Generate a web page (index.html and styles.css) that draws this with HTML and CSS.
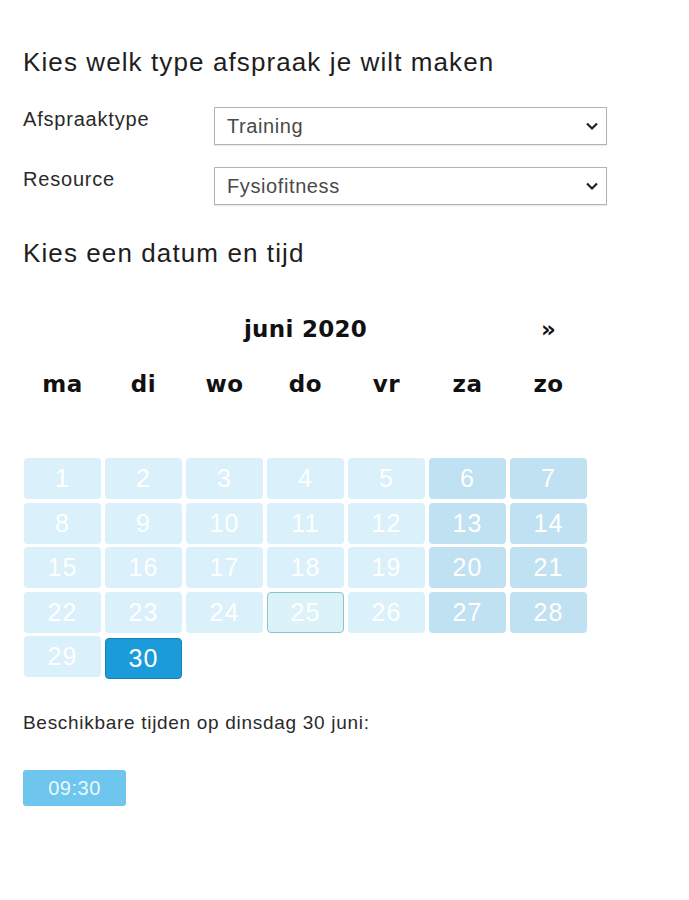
FILE: index.html
```html
<!DOCTYPE html>
<html lang="nl">
<head>
<meta charset="UTF-8" />
<meta name="viewport" content="width=device-width, initial-scale=1" />
<title>Afspraak maken</title>
<link rel="stylesheet" href="styles.css">
</head>
<body>

<div class="page">
  <h2 class="title">Kies welk type afspraak je wilt maken</h2>

  <div class="form-row">
    <label class="form-label">Afspraaktype</label>
    <div class="select">
      <span>Training</span>
      <svg class="chev" width="14" height="10" viewBox="0 0 14 10"><path d="M2 2.5 L7 7.5 L12 2.5" fill="none" stroke="#222" stroke-width="2.2"/></svg>
    </div>
  </div>

  <div class="form-row">
    <label class="form-label">Resource</label>
    <div class="select">
      <span>Fysiofitness</span>
      <svg class="chev" width="14" height="10" viewBox="0 0 14 10"><path d="M2 2.5 L7 7.5 L12 2.5" fill="none" stroke="#222" stroke-width="2.2"/></svg>
    </div>
  </div>

  <h2 class="title title-date">Kies een datum en tijd</h2>

  <div class="calendar">
    <div class="cal-head">
      <span></span>
      <span class="month">juni 2020</span>
      <span class="next">&raquo;</span>
    </div>
    <div class="weekdays">
      <span>ma</span><span>di</span><span>wo</span><span>do</span><span>vr</span><span>za</span><span>zo</span>
    </div>
    <div class="days">
      <span class="day">1</span><span class="day">2</span><span class="day">3</span><span class="day">4</span><span class="day">5</span><span class="day weekend">6</span><span class="day weekend">7</span>
      <span class="day">8</span><span class="day">9</span><span class="day">10</span><span class="day">11</span><span class="day">12</span><span class="day weekend">13</span><span class="day weekend">14</span>
      <span class="day">15</span><span class="day">16</span><span class="day">17</span><span class="day">18</span><span class="day">19</span><span class="day weekend">20</span><span class="day weekend">21</span>
      <span class="day">22</span><span class="day">23</span><span class="day">24</span><span class="day today">25</span><span class="day">26</span><span class="day weekend">27</span><span class="day weekend">28</span>
      <span class="day">29</span><span class="day selected">30</span>
    </div>
  </div>

  <p class="avail">Beschikbare tijden op dinsdag 30 juni:</p>

  <button class="slot">09:30</button>
</div>

</body>
</html>
```

FILE: styles.css
```css
html, body {
  margin: 0; padding: 0;
  background: #fff;
  font-family: "Liberation Sans", Arial, sans-serif;
  color: #222;
}
.page {
  padding: 44px 0 0 23px;
  width: 600px;
}
.title {
  margin: 0 0 27px 0;
  font-size: 26px;
  font-weight: normal;
  letter-spacing: 1.1px;
  color: #1e1e1e;
  line-height: 36px;
}
.title-date {
  margin-top: 30px;
}
.form-row {
  display: grid;
  grid-template-columns: 191px 393px;
  margin-bottom: 22px;
}
.form-row + .form-row {
  margin-bottom: 0;
}
.form-label {
  font-size: 20px;
  letter-spacing: 0.8px;
  color: #2a2a2a;
  line-height: 26px;
  margin-top: -1px;
}
.select {
  height: 36px;
  border: 1px solid #b4b4b4;
  box-shadow: 0 1px 1px rgba(0,0,0,0.08);
  display: flex;
  align-items: center;
  justify-content: space-between;
  padding: 0 7px 0 12px;
  font-size: 20px;
  letter-spacing: 0.6px;
  color: #4a4a4a;
}
.chev {
  display: block;
}
.calendar {
  width: 563px;
  margin-left: 1px;
  margin-top: 43px;
  font-family: "DejaVu Sans", Verdana, sans-serif;
  font-weight: bold;
  color: #111;
}
.cal-head,
.weekdays,
.days {
  display: grid;
  grid-template-columns: repeat(7, 77px);
  column-gap: 4px;
}
.cal-head {
  font-size: 23px;
  line-height: 30px;
  letter-spacing: 0.3px;
}
.month {
  grid-column: 2 / 7;
  text-align: center;
}
.next {
  text-align: center;
  font-size: 23px;
}
.weekdays {
  margin-top: 25px;
  font-size: 23px;
  line-height: 30px;
  letter-spacing: 0.5px;
}
.weekdays span {
  text-align: center;
}
.days {
  margin-top: 59px;
  row-gap: 3.5px;
  grid-auto-rows: 41px;
  font-family: "Liberation Sans", Arial, sans-serif;
  font-weight: normal;
  font-size: 25px;
  letter-spacing: 1.2px;
}
.day {
  background: #daf0fa;
  color: #fff;
  border-radius: 4px;
  display: flex;
  align-items: center;
  justify-content: center;
  box-sizing: border-box;
}
.day.weekend {
  background: #bfe1f1;
}
.day.today {
  background: #daf2f8;
  border: 1px solid #8fc2cd;
}
.day.selected {
  background: #1b9bd9;
  border: 1px solid #1581b8;
  margin-top: 2px;
  margin-bottom: -2px;
}
.avail {
  margin: 33px 0 0 0;
  font-size: 19px;
  letter-spacing: 0.7px;
  color: #2a2a2a;
  line-height: 26px;
}
.slot {
  margin-top: 34px;
  width: 103px;
  height: 36px;
  border: none;
  border-radius: 3px;
  background: #6ec6ef;
  color: #eaf7fd;
  font-family: "Liberation Sans", Arial, sans-serif;
  font-size: 20px;
  letter-spacing: 0.5px;
  padding: 0;
}
```
